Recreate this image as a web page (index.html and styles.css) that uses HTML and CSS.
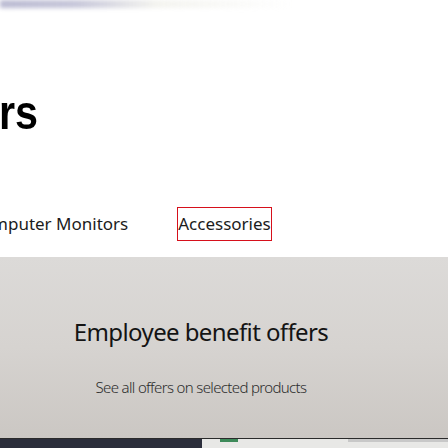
FILE: index.html
```html
<!DOCTYPE html>
<html lang="en">
<head>
<meta charset="utf-8">
<link rel="stylesheet" href="styles.css">
</head>
<body>
<div class="top-fade"></div>
<h1 class="page-title"><span class="page-title-text">rs</span></h1>
<nav class="tabs">
  <a class="tab">Computer Monitors</a>
  <a class="tab active">Accessories</a>
</nav>
<section class="banner">
  <h2 class="banner-title">Employee benefit offers</h2>
  <p class="banner-sub">See all offers on selected products</p>
</section>
<div class="strip">
  <div class="strip-dark"></div>
  <div class="strip-light"><span class="strip-tab"></span><span class="strip-bar"></span></div>
</div>
</body>
</html>
```
FILE: styles.css
```css
html, body {
  margin: 0;
  padding: 0;
  width: 448px;
  height: 448px;
  overflow: hidden;
  background: #ffffff;
}
body {
  font-family: "Noto Sans", "Open Sans", sans-serif;
  color: #1a1a1a;
}
.top-fade {
  height: 8px;
  background: linear-gradient(90deg, rgba(140,140,180,0.6) 0%, rgba(150,150,185,0.55) 17%, rgba(230,230,220,0.45) 35%, rgba(255,255,255,0) 65%);
  filter: blur(2px);
}
.page-title {
  margin: 81px 0 0 -1px;
  font-family: "Liberation Sans", Arial, sans-serif;
  font-weight: 700;
  font-size: 48px;
  line-height: 48px;
  color: #000;
}
.page-title-text {
  display: inline-block;
  transform: scaleX(0.86);
  transform-origin: left center;
}
.tabs {
  display: flex;
  align-items: center;
  gap: 48px;
  margin: 70px 0 0 -30px;
}
.tab {
  font-size: 17px;
  line-height: 32px;
  color: #1c1c1c;
  white-space: nowrap;
  padding: 0;
  border: 1px solid transparent;
}
.tab.active {
  border-color: #d6101b;
}
.banner {
  margin-top: 16px;
  height: 181px;
  background: linear-gradient(180deg, #dcdad8 0%, #d6d3d0 50%, #cbc7c3 100%);
  text-align: center;
  padding: 0 46px 0 0;
  box-sizing: border-box;
  overflow: hidden;
}
.banner-title {
  margin: 0;
  padding-top: 60px;
  font-size: 24px;
  font-weight: 400;
  line-height: 30px;
  color: #141414;
  letter-spacing: -0.6px;
}
.banner-sub {
  margin: 30px 0 0;
  font-size: 15px;
  font-weight: 300;
  line-height: 20px;
  letter-spacing: -0.65px;
  color: #2c2c2c;
}
.strip {
  display: flex;
  height: 10px;
  border-top: 1px solid #2a2a2a;
}
.strip-dark {
  width: 202px;
  background: #2b2e3b;
}
.strip-light {
  flex: 1;
  background: #e8e8e6;
  display: flex;
  align-items: flex-start;
  padding-left: 18px;
  gap: 110px;
}
.strip-tab {
  width: 18px;
  height: 3px;
  background: #3e8a5a;
}
.strip-bar {
  flex: 1;
  height: 3px;
  background: #c8c8c8;
}
```
